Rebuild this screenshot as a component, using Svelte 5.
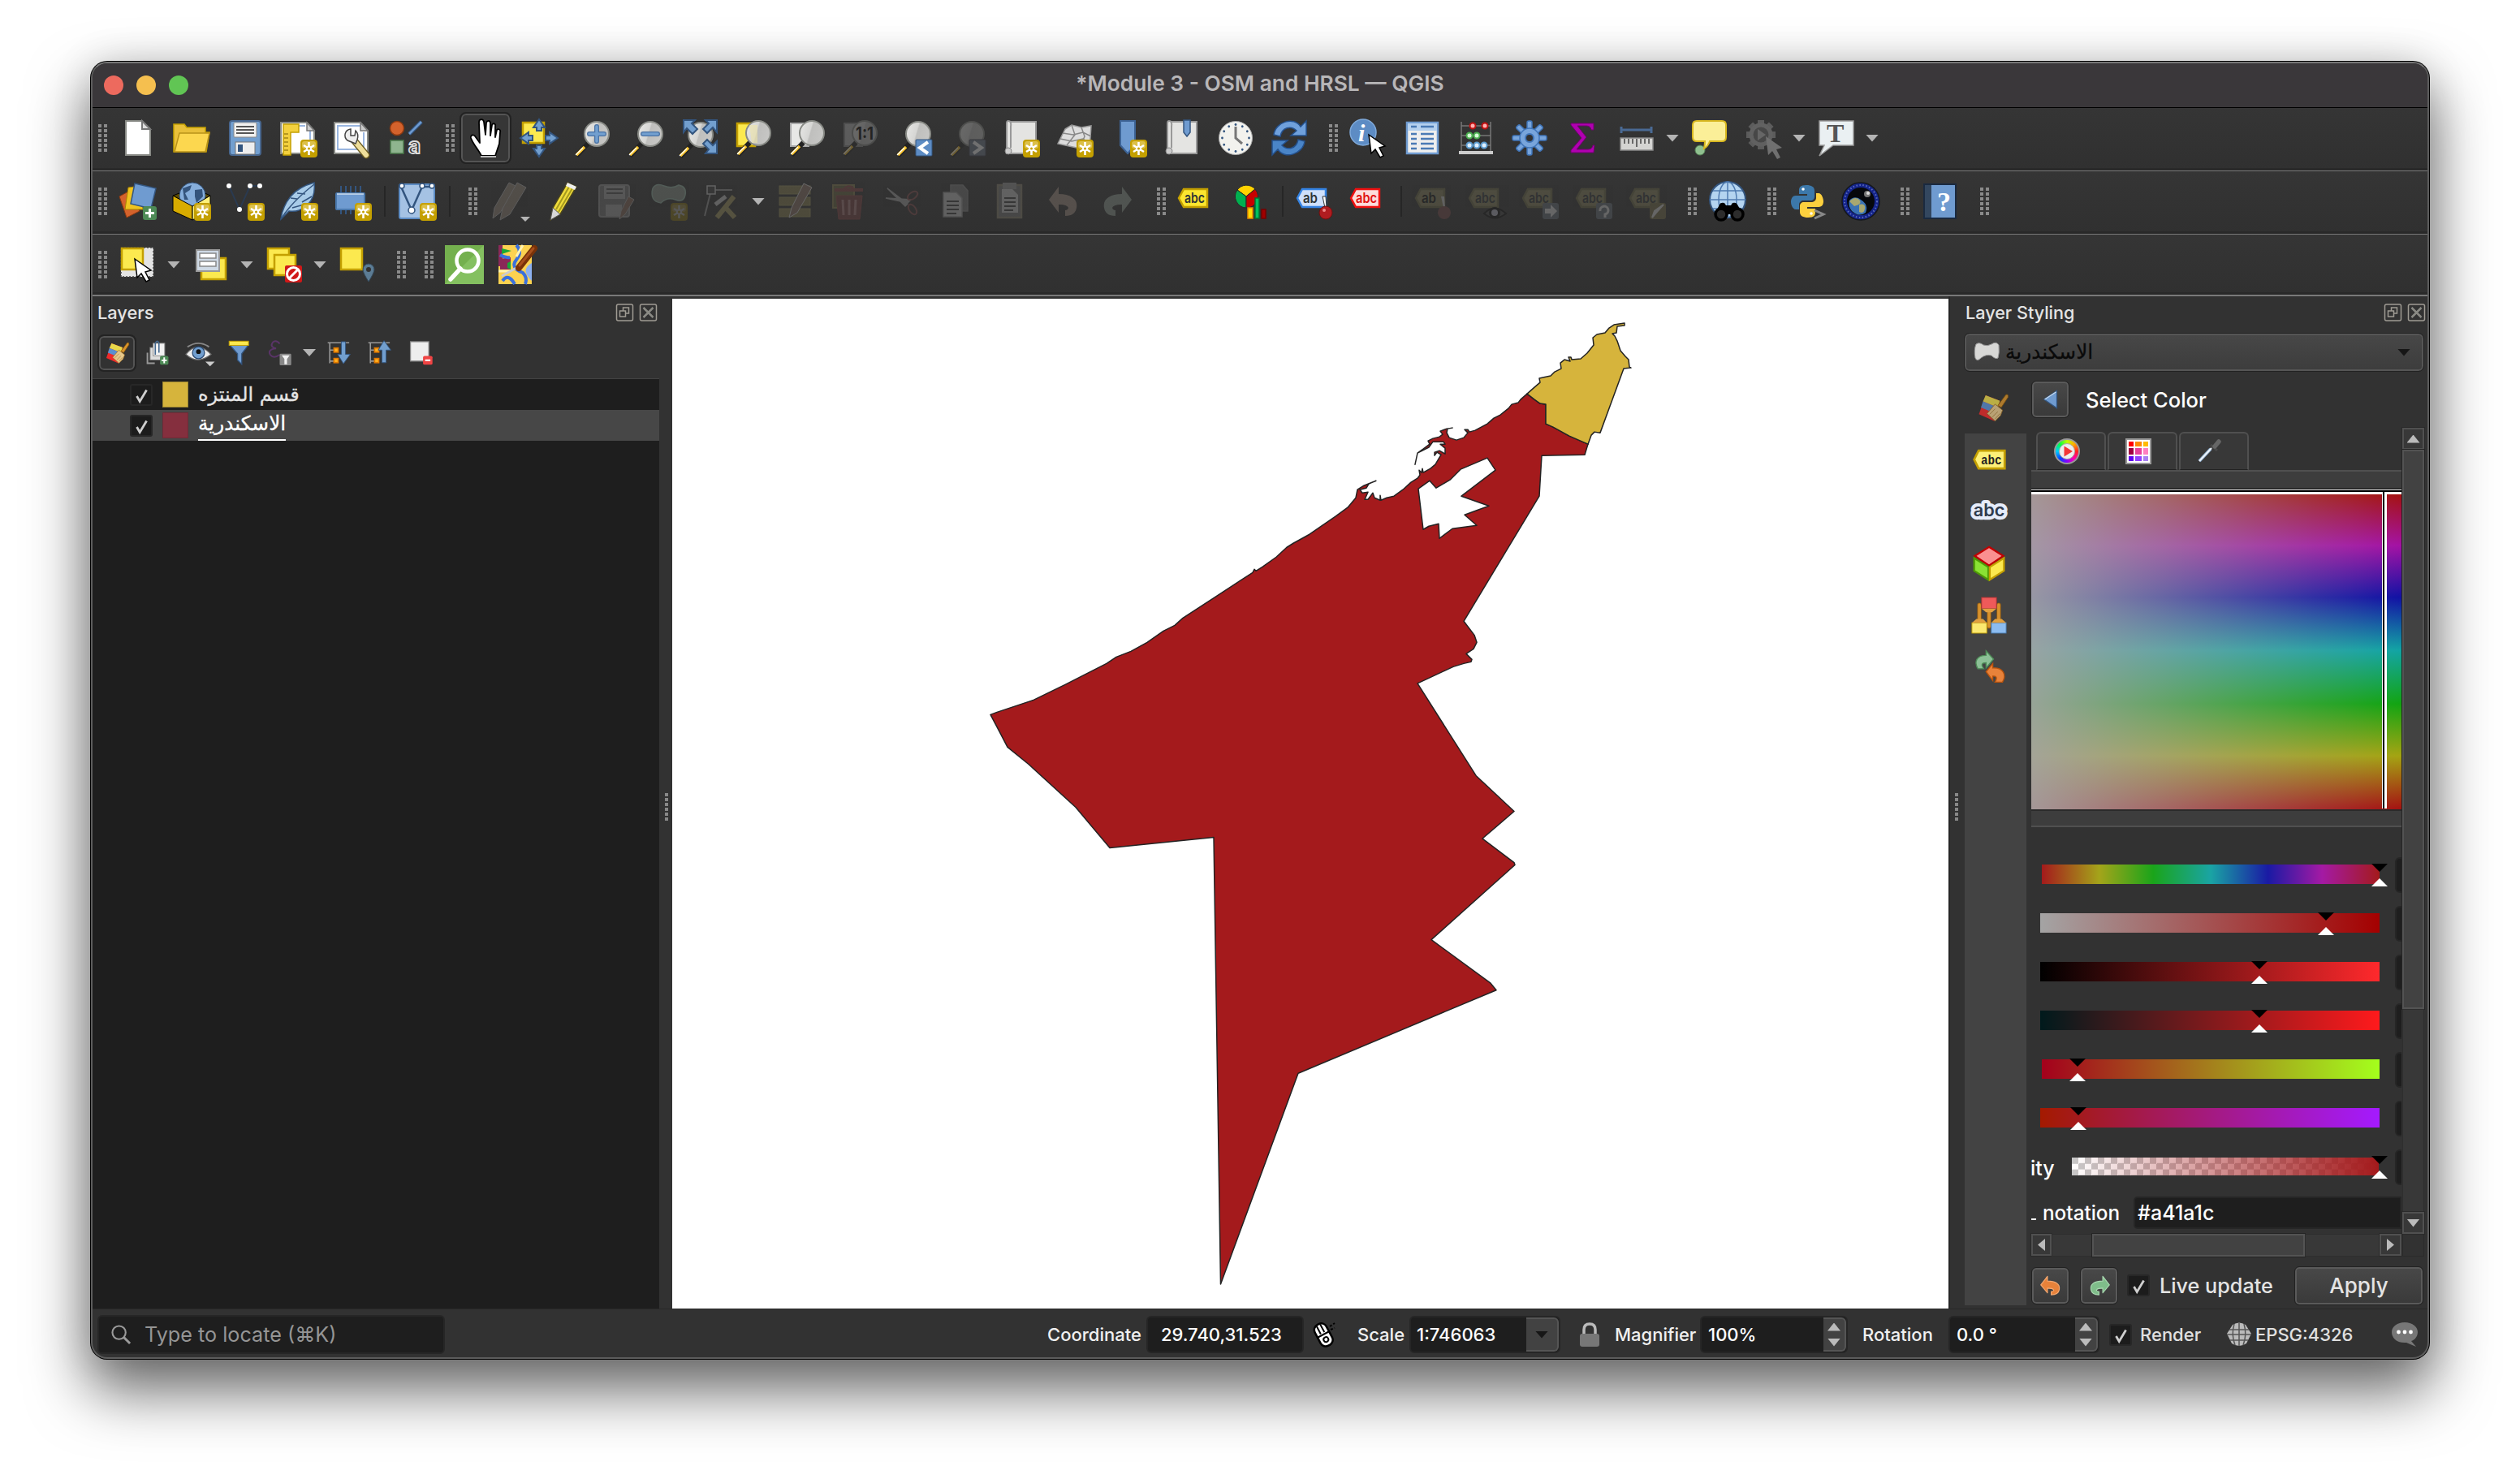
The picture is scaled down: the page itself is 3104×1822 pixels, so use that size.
<script>
  // Toolbar contents; "|" is a separator, "h" a drag handle, "hw" the wide variant.
  // A trailing "+" marks a drop-down arrow, a leading "~" a disabled action.
  const rows = [
    'h0 new open save layoutnew layoutmgr style h hand! pan zoomin zoomout zoomfull zoomsel zoomlayer ~zoomnative zoomlast ~zoomnext mapnew map3d bookmarknew bookmarks clock refresh h identify table abacus gear sigma measure+ tip ~action+ text+'.split(' '),
    'h0 source geopackage vnew spatialite chip | virtual | h ~pencils pencil ~saveedit ~addpoly ~nodes+ ~multiedit ~trash ~cut ~copy ~paste ~undo ~redo h label diagram | labpin labred | ~labpin2 ~labeye ~labmove ~labrot ~labedit h globe h python nga h help h'.split(' '),
    'h0 select+ form+ deselect+ selloc h hw osmsearch osmedit'.split(' ')
  ].map((r) =>
    r.map((t) => ({
      off: t.startsWith('~'),
      drop: t.endsWith('+'),
      on: t.endsWith('!'),
      name: t.replace(/[~+!]/g, '')
    }))
  );

  const sliders = [
    { cls: 'hue', at: 429 },
    { cls: 'sat', at: 363 },
    { cls: 'val', at: 281 },
    { cls: 'red', at: 281 },
    { cls: 'green', at: 57 },
    { cls: 'blue', at: 58 }
  ];

  const beard = [0, 1, 2, 3, 4, 5];
  const ticks = [0, 1, 2, 3, 4, 5, 6, 7, 8, 9, 10, 11];
</script>

{#snippet star(x, y)}
  <g transform="translate({x} {y})">
    <rect width="21" height="22" rx="4" fill="#c4a000" />
    <rect x="2" y="2" width="17" height="9" rx="3" fill="#dcc04a" />
    <path d="M10.500 3v16M4 7l13 8M17 7l-13 8" stroke="#fff" stroke-width="2.600" />
    <circle cx="10.500" cy="11" r="3.500" fill="#fff" />
    <circle cx="10.500" cy="11" r="1.500" fill="#c4a000" />
  </g>
{/snippet}

{#snippet lens(cx, cy)}
  <path d="M{cx - 10} {cy + 11}L{cx - 25} {cy + 27}" stroke="#222" stroke-width="6" />
  <path d="M{cx - 15} {cy + 16}L{cx - 25} {cy + 26}" stroke="#fcc62e" stroke-width="3.500" />
  <path d="M{cx - 17} {cy + 17}L{cx - 26} {cy + 26}" stroke="#fff" stroke-width="1.200" />
  <circle {cx} {cy} r="15" fill="url(#lensg)" stroke="#888a85" stroke-width="2" />
{/snippet}

{#snippet cursor(x, y)}
  <path transform="translate({x} {y})" d="M0 0L3 23L8 18L14 28L18 26L13 16L20 14Z" fill="#fff" stroke="#000" stroke-width="1.500" />
{/snippet}

{#snippet tag(fill, stroke, s)}
  <path d="M2 20L8 9H37V31H8Z" {fill} {stroke} stroke-width="2.500" />
  <text x="9" y="26" font-size="17" font-weight="600" textLength="25" lengthAdjust="spacingAndGlyphs" fill="#2e3436">{s}</text>
{/snippet}

{#snippet pencilShape()}
  <path d="M31 1L42 6L22 40L10 47L13 32Z" fill="#f0dc3a" stroke="#4a4420" stroke-width="1.500" />
  <path d="M33 6L17 34M37 8L20 37" stroke="#a59a20" stroke-width="2" />
  <path d="M31 1L42 6L40 10L29 5Z" fill="#eee" />
  <path d="M13 32L22 40L10 47Z" fill="#d8d8d8" stroke="#555" />
{/snippet}

{#snippet paint()}
  <path d="M13 6L34 14L26 44L3 34Z" fill="#ef2929" />
  <path d="M13 6L34 14L31 24L9 15Z" fill="#e8d84a" />
  <path d="M9 15L31 24L28 33L6 24Z" fill="#5b8fd0" />
  <path d="M31 21L43 5Q47 4 46 9L36 24Z" fill="#d8932c" stroke="#8f5902" />
  <path d="M27 19L38 28L35 36L27 44L15 33Z" fill="#e6c78a" stroke="#9a6a20" />
  <path d="M19 34L27 26M23 38L31 30M27 41L34 33" stroke="#a87c3a" />
{/snippet}

{#snippet undoShape(color, edge)}
  <path d="M3 22L17 4V14C34 14 44 20 42 32C41 38 36 43 25 43V36C33 36 33 29 17 29V39Z" fill={color} stroke={edge} stroke-width="2" stroke-linejoin="round" />
{/snippet}

{#snippet icon(n)}
  <svg class="ic" viewBox="0 0 48 48">
    {#if n === 'new'}
      <path d="M9 3H29L39 13V45H9Z" fill="#fff" stroke="#888a85" stroke-width="2" /><path d="M29 3V13H39Z" fill="#ddd" stroke="#777" stroke-width="2" />
    {:else if n === 'open'}
      <path d="M2 7H15L18 11H41V17H46L42 41H2Z" fill="#e9c03a" stroke="#c4a000" stroke-width="1.500" /><path d="M9 18H46L41 41H3Z" fill="#fcd74f" stroke="#b8921a" stroke-width="1.500" />
    {:else if n === 'save'}
      <rect x="5" y="3" width="38" height="42" rx="3" fill="#729fcf" stroke="#48678f" stroke-width="2" /><rect x="10" y="5" width="28" height="18" rx="1" fill="#f2f2f0" stroke="#888" /><path d="M13 10H35M13 14H35M13 18H35" stroke="#555" stroke-width="2" /><rect x="12" y="29" width="24" height="15" fill="#eee" stroke="#777" /><rect x="15" y="32" width="6" height="9" fill="#33557f" />
    {:else if n === 'layoutnew'}
      <path d="M2 5H34L43 15V43H2Z" fill="#fff" stroke="#888a85" stroke-width="2" /><path d="M7 9H32M38 15V38" stroke="#9ab6e0" stroke-width="2" /><path d="M34 5V15H43Z" fill="#ccc" stroke="#777" stroke-width="1.500" /><path d="M5 7H24V17H14V45H5Z" fill="#f3d03e" stroke="#c4a000" stroke-width="1.500" /><path d="M6 19H11M6 24H11M6 29H11M6 34H11M6 39H11" stroke="#7a6100" />{@render star(26, 26)}
    {:else if n === 'layoutmgr'}
      <path d="M2 5H34L43 15V43H2Z" fill="#fff" stroke="#888a85" stroke-width="2" /><path d="M34 9H6V38H38V17" fill="none" stroke="#9ab6e0" stroke-width="2" /><path d="M34 5V15H43Z" fill="#ccc" stroke="#777" stroke-width="1.500" /><path d="M27 28L41 45" stroke="#6b5c22" stroke-width="9" stroke-linecap="round" /><path d="M27 28L41 45" stroke="#efdf9a" stroke-width="6" stroke-linecap="round" /><path d="M22 13C14 14 13 23 18 27L28 31L30 26C32 20 30 17 28 15L27 21L22 21Z" fill="#eee" stroke="#444" stroke-width="1.500" />
    {:else if n === 'style'}
      <circle cx="13" cy="12" r="8.500" fill="#d4622c" stroke="#8f3a10" stroke-width="1.500" /><path d="M28 19L43 4" stroke="#33557f" stroke-width="5" /><path d="M28 19L43 4" stroke="#6f9bd0" stroke-width="2.500" /><rect x="5" y="27" width="16" height="16" fill="#8fb58f" stroke="#4a7a4a" stroke-width="1.500" /><text x="27" y="43" font-size="26" font-weight="700" fill="#333" stroke="#ddd" stroke-width="1.800">a</text>
    {:else if n === 'hand'}
      <path d="M6 24C5 20 10 19 12 23L17 30L16 5C16 0 21 0 22 4L24 20L25 5C26 2 30 2 30 6L30 21L32 8C33 5 37 6 36 10L36 23L38 14C40 12 43 14 42 17L41 31L36 46H19C15 38 9 32 6 24Z" fill="#fff" stroke="#000" stroke-width="1.800" stroke-linejoin="round" /><path d="M18 47H37" stroke="#bbb" stroke-width="2" />
    {:else if n === 'pan'}
      <rect x="4" y="5" width="26" height="25" fill="#fce94f" stroke="#c4a000" stroke-width="2.500" /><path d="M24 1L31 11H27V15H21V11H17ZM24 47L31 37H27V33H21V37H17ZM1 24L11 17V21H16V27H11V31ZM47 24L37 17V21H32V27H37V31Z" fill="#729fcf" stroke="#33557f" stroke-width="2" />
    {:else if n === 'zoomin'}
      {@render lens(29, 19)}<path d="M29 10V28M20 19H38" stroke="#4a72a4" stroke-width="6" stroke-linecap="round" /><path d="M29 10V28M20 19H38" stroke="#729fcf" stroke-width="3.500" stroke-linecap="round" />
    {:else if n === 'zoomout'}
      {@render lens(29, 19)}<path d="M20 19H38" stroke="#4a72a4" stroke-width="6" stroke-linecap="round" /><path d="M20 19H38" stroke="#729fcf" stroke-width="3.500" stroke-linecap="round" />
    {:else if n === 'zoomfull'}
      {@render lens(25, 20)}<path d="M4 2H18L14 6L21 13L15 19L8 12L4 17ZM45 2H31L35 6L28 13L33 18L40 11L45 17ZM45 43H31L35 38L28 31L33 26L40 33L45 28Z" fill="#729fcf" stroke="#33557f" stroke-width="2" />
    {:else if n === 'zoomsel'}
      <rect x="4" y="6" width="22" height="28" fill="#fce94f" stroke="#c4a000" stroke-width="2.500" />{@render lens(30, 18)}<path d="M19 8H29V30H22Z" fill="#efe4a8" opacity=".6" />
    {:else if n === 'zoomlayer'}
      <rect x="4" y="6" width="22" height="28" fill="#e8e8e6" stroke="#aaa" stroke-width="2" />{@render lens(30, 18)}
    {:else if n === 'zoomnative'}
      <rect x="4" y="6" width="22" height="28" fill="#bbb" stroke="#888" stroke-width="2" />{@render lens(29, 18)}<text x="18" y="26" font-size="21" font-weight="700" textLength="22" lengthAdjust="spacingAndGlyphs" fill="#000">1:1</text>
    {:else if n === 'zoomlast'}
      {@render lens(29, 19)}<rect x="26" y="26" width="20" height="20" rx="1" fill="#5d8cc4" stroke="#33557f" /><path d="M41 29L31 36L41 43" stroke="#fff" stroke-width="4" fill="none" />
    {:else if n === 'zoomnext'}
      {@render lens(29, 19)}<rect x="26" y="26" width="20" height="20" rx="1" fill="#707c8c" stroke="#445" /><path d="M31 29L41 36L31 43" stroke="#fff" stroke-width="4" fill="none" />
    {:else if n === 'mapnew'}
      <path d="M10 4H42V43H6V6Q6 3 8 3Q12 3 11 10V36" fill="#e4e4e2" stroke="#999" stroke-width="2" /><circle cx="8" cy="40" r="4" fill="#ccc" stroke="#888" />{@render star(26, 26)}
    {:else if n === 'map3d'}
      <path d="M12 13L20 8L32 11L44 9L42 38L26 36L3 31Z" fill="#ddd" stroke="#999" stroke-width="1.500" /><path d="M9 18L22 20L34 17L44 22M6 25L20 28L34 25L43 31M20 8L24 20L14 33M32 11L36 22L30 36" fill="none" stroke="#888" stroke-width="1.500" />{@render star(26, 26)}
    {:else if n === 'bookmarknew'}
      <path d="M14 3H32V33L23 43L14 33Z" fill="#6f9bd0" stroke="#3d6496" stroke-width="2" />{@render star(26, 26)}
    {:else if n === 'bookmarks'}
      <path d="M10 4H42V43H6V6Q6 3 8 3Q12 3 11 10V36" fill="#e4e4e2" stroke="#999" stroke-width="2" /><circle cx="8" cy="40" r="4" fill="#ccc" stroke="#888" /><path d="M26 2H34V17L30 22L26 17Z" fill="#6f9bd0" stroke="#33557f" stroke-width="1.500" />
    {:else if n === 'clock'}
      <circle cx="24" cy="24" r="20.500" fill="#f2f2ee" stroke="#aaa" />
      {#each ticks as t}<circle cx="24" cy="7.500" r="1.400" fill="#33557f" transform="rotate({t * 30} 24 24)" />{/each}
      <path d="M24 10V24L32 31" fill="none" stroke="#777" stroke-width="3" />
    {:else if n === 'refresh'}
      <path d="M5 20C7 4 30 -3 38 10L45 3V21H26L33 15C26 8 15 11 13 22Z" fill="#6fa0dc" stroke="#24508c" stroke-width="1.500" /><path d="M43 28C41 44 18 51 10 38L3 45V27H22L15 33C22 40 33 37 35 26Z" fill="#4a85c8" stroke="#24508c" stroke-width="1.500" />
    {:else if n === 'identify'}
      <circle cx="17" cy="17" r="16" fill="#5d8cc4" stroke="#7faadb" stroke-width="1.500" /><text x="11" y="28" font-size="30" font-weight="700" font-style="italic" font-family="Liberation Serif, serif" fill="#fff">i</text>{@render cursor(24, 20)}
    {:else if n === 'table'}
      <rect x="5" y="5" width="38" height="38" fill="#eee" stroke="#6f9bd0" stroke-width="2.500" /><rect x="6" y="6" width="36" height="9" fill="#b4d0ee" /><path d="M10 10H17M22 10H38M10 19H17M22 19H38M10 25H17M22 25H38M10 31H17M22 31H38M10 37H17M22 37H38" stroke="#4a7ab5" stroke-width="2.500" />
    {:else if n === 'abacus'}
      <path d="M6 4V42M42 4V42M6 9H42M6 21H42M6 33H42" stroke="#777" stroke-width="1.500" /><path d="M3 42H45" stroke="#ccc" stroke-width="4" />
      <g stroke-width="2"><g fill="#ffb0b0" stroke="#c01010"><circle cx="20" cy="9" r="3.500" /><circle cx="35" cy="9" r="3.500" /></g><g fill="#d8ffd8" stroke="#4caf50"><circle cx="16" cy="21" r="3.500" /><circle cx="25" cy="21" r="3.500" /></g><g fill="#e0f0ff" stroke="#5d9cd0"><circle cx="16" cy="33" r="3.500" /><circle cx="25" cy="33" r="3.500" /><circle cx="34" cy="33" r="3.500" /></g></g>
    {:else if n === 'gear'}
      {#each [0, 45, 90, 135, 180, 225, 270, 315] as a}<rect x="21" y="3" width="6" height="12" rx="2" fill="#78a5dc" stroke="#3f74b8" stroke-width="1.500" transform="rotate({a} 24 24)" />{/each}<circle cx="24" cy="24" r="12" fill="#78a5dc" stroke="#3f74b8" stroke-width="1.500" /><circle cx="24" cy="24" r="5" fill="#323232" stroke="#3f74b8" stroke-width="2" />
    {:else if n === 'sigma'}
      <path d="M9 6H37V14H34Q33 9 28 9H17L28 23L16 38H30Q35 38 36 33H38L37 42H9V39L22 24L9 8Z" fill="#b000b0" stroke="#700070" />
    {:else if n === 'measure'}
      <path d="M5 14H42M5 10V18M42 10V18" stroke="#4a6a94" stroke-width="3" /><rect x="4" y="24" width="40" height="15" fill="#d4d4d2" stroke="#888" stroke-width="1.500" /><path d="M9 25V31M14 25V31M19 25V31M24 25V35M29 25V31M34 25V31M39 25V31" stroke="#444" stroke-width="1.500" />
    {:else if n === 'tip'}
      <circle cx="12" cy="39" r="6" fill="#8fc08f" stroke="#5a8a5a" /><path d="M8 3H39Q44 3 44 8V23Q44 28 39 28H24Q22 34 17 37Q18 32 18 28H8Q3 28 3 23V8Q3 3 8 3Z" fill="#fbef98" stroke="#d8b820" stroke-width="2" />
    {:else if n === 'action'}
      {#each [0, 45, 90, 135, 180, 225, 270, 315] as a}<rect x="17" y="2" width="8" height="8" fill="#bbb" transform="rotate({a} 21 20)" />{/each}<circle cx="21" cy="20" r="12" fill="#777" stroke="#ccc" stroke-width="5" /><path d="M17 13L27 20L17 27Z" fill="#ddd" /><path transform="translate(27 22)" d="M0 0L3 23L8 18L14 28L18 26L13 16L20 14Z" fill="#fff" />
    {:else if n === 'text'}
      <path d="M3 3H45V33H20L3 46L9 33H3Z" fill="#eaf0f2" stroke="#999" stroke-width="1.500" /><text x="12" y="29" font-size="32" font-family="Liberation Serif, serif" font-weight="700" fill="#555">T</text>
    {:else if n === 'source'}
      <path d="M1 18L12 12L26 36L10 44Z" fill="#d4622c" stroke="#8f3a10" /><path d="M12 7L28 5L30 34L8 34Z" fill="#f0c420" stroke="#a88400" /><path d="M20 2L46 8L40 33L15 27Z" fill="#6f9bd0" stroke="#33557f" stroke-width="1.500" /><rect x="30" y="30" width="17" height="17" rx="3" fill="#4d8a56" /><path d="M38.500 33V44M33 38.500H44" stroke="#fff" stroke-width="3" />
    {:else if n === 'geopackage'}
      <path d="M1 17L14 12L36 12L47 17L25 30Z" fill="#5c4a00" stroke="#000" /><circle cx="25" cy="17" r="16" fill="#86aedb" stroke="#33557f" /><path d="M13 8L24 4L22 10L16 14L20 22L15 22ZM28 10L37 9L38 18L30 26L28 18Z" fill="#34547c" /><path d="M1 17L25 30V47L1 36Z" fill="#d8ac00" stroke="#000" /><path d="M25 30L47 17V35L25 47Z" fill="#fdf07a" stroke="#000" />{@render star(27, 26)}
    {:else if n === 'vnew'}
      <path d="M4 5L17 34L30 5H42" stroke="#2a3a50" stroke-width="2" fill="none" /><g fill="#fff"><circle cx="4" cy="5" r="3" /><circle cx="17" cy="34" r="3" /><circle cx="30" cy="5" r="3" /><circle cx="42" cy="5" r="3" /></g>{@render star(27, 26)}
    {:else if n === 'spatialite'}
      <path d="M2 46Q4 30 14 18T43 1Q45 18 35 28T12 36Z" fill="#a8cbe8" stroke="#33557f" stroke-width="1.500" /><path d="M2 46Q14 26 43 3M14 20L22 21M22 14L32 15M16 32L34 27M28 25L40 18" stroke="#33557f" fill="none" stroke-width="1.500" />{@render star(27, 26)}
    {:else if n === 'chip'}
      <path d="M10 5V40M16 5V40M22 5V40M28 5V40M34 5V40" stroke="#33557f" stroke-width="2" /><rect x="4" y="14" width="35" height="20" rx="1" fill="#6f9bd0" stroke="#4a78ac" stroke-width="2" /><path d="M5 15H38" stroke="#cde" stroke-width="1.500" />{@render star(27, 26)}
    {:else if n === 'virtual'}
      <rect x="2" y="3" width="43" height="42" rx="2" fill="#a5c2e4" stroke="#5d8cc4" stroke-width="2" /><path d="M4 6L17 35L30 6H42" stroke="#33557f" stroke-width="2.500" fill="none" /><g fill="#fff" stroke="#33557f" stroke-width="1.500"><circle cx="5" cy="5" r="3" /><circle cx="17" cy="35" r="4" /><circle cx="30" cy="5" r="3" /><circle cx="42" cy="5" r="3" /></g>{@render star(27, 26)}
    {:else if n === 'pencils'}
      <g fill="#9a8a7c" stroke="#bbb"><path d="M25 1L35 6L14 38L5 45L7 32Z" /><path d="M35 1L46 7L26 40L14 47L17 33Z" /></g>
    {:else if n === 'pencil'}
      {@render pencilShape()}
    {:else if n === 'saveedit'}
      <rect x="4" y="4" width="37" height="39" rx="3" fill="#777" stroke="#999" stroke-width="2" /><rect x="10" y="5" width="26" height="16" fill="#aaa" /><path d="M13 9H33M13 14H33" stroke="#555" stroke-width="2" /><rect x="12" y="28" width="20" height="14" fill="#aaa" /><path d="M40 18L47 22L36 40L29 46L31 36Z" fill="#8a6a5a" stroke="#aaa" />
    {:else if n === 'addpoly'}
      <path d="M4 8Q8 1 18 5T36 4Q46 6 44 16T32 22T14 26Q0 24 4 8Z" fill="#8a958c" stroke="#9ba" stroke-width="1.500" /><g opacity=".6">{@render star(26, 26)}</g>
    {:else if n === 'nodes'}
      <path d="M2 42L10 10H36" stroke="#999" fill="none" stroke-width="2" /><rect x="5" y="5" width="10" height="10" fill="#444" stroke="#ccc" stroke-width="1.500" /><path d="M17 44L38 18" stroke="#a89c60" stroke-width="6" /><path d="M27 31L39 44" stroke="#a89c60" stroke-width="6" /><path d="M15 28L28 18" stroke="#ccc" stroke-width="5" />
    {:else if n === 'multiedit'}
      <g fill="#8b8350" stroke="#a09860"><rect x="4" y="5" width="38" height="10" /><rect x="4" y="19" width="38" height="10" /><rect x="4" y="33" width="38" height="10" /></g><path d="M34 2L44 7L26 38L16 44L19 32Z" fill="#8f7468" stroke="#ddd" />
    {:else if n === 'trash'}
      <rect x="4" y="4" width="26" height="28" fill="#6b6840" stroke="#8b8350" stroke-width="2" /><path d="M8 17H40L37 46H11Z" fill="#7a4444" stroke="#904848" /><path d="M6 10H41" stroke="#8a4848" stroke-width="4" /><path d="M16 22L17 41M24 22V41M32 22L31 41" stroke="#b08080" stroke-width="3" /><path d="M17 9Q24 2 30 9" stroke="#904848" stroke-width="2.500" fill="none" />
    {:else if n === 'cut'}
      <path d="M5 8L30 27L27 30ZM3 20L34 22L30 26Z" fill="#aaa" stroke="#aaa" stroke-width="1.500" /><g fill="none" stroke="#8a5050" stroke-width="2"><ellipse cx="36" cy="17" rx="7" ry="4" transform="rotate(-35 36 17)" /><ellipse cx="36" cy="34" rx="7" ry="4" transform="rotate(55 36 34)" /></g>
    {:else if n === 'copy'}
      <path d="M17 4H32L38 11V36H17Z" fill="#777" stroke="#888" stroke-width="1.500" /><path d="M8 13H24L31 20V43H8Z" fill="#ccc" stroke="#999" stroke-width="1.500" /><path d="M12 24H27M12 29H27M12 34H27M12 39H24" stroke="#444" stroke-width="2" />
    {:else if n === 'paste'}
      <rect x="9" y="4" width="29" height="40" fill="#777" stroke="#8b8570" stroke-width="2.500" /><path d="M14 9H27L34 16V38H14Z" fill="#ccc" /><rect x="15" y="1" width="17" height="8" fill="#999" /><path d="M17 20H31M17 25H31M17 30H31M17 35H28" stroke="#444" stroke-width="2" />
    {:else if n === 'undo'}
      <path d="M6 22L18 6V15C34 15 42 22 40 32C39 38 35 42 26 42V35C32 34 32 28 18 28V38Z" fill="#a89488" />
    {:else if n === 'redo'}
      <path d="M42 22L30 6V15C14 15 6 22 8 32C9 38 13 42 22 42V35C16 34 16 28 30 28V38Z" fill="#96a298" />
    {:else if n === 'label'}
      {@render tag('#fce62f', '#c4a000', 'abc')}
    {:else if n === 'diagram'}
      <g stroke="#2a2a2a"><path d="M19 18L8 10A14 14 0 0 1 30 9Z" fill="#ffd200" /><path d="M19 18L8 10A14 14 0 0 0 19 32Z" fill="#00b050" /><path d="M19 18L30 9A14 14 0 0 1 19 32Z" fill="#c80000" /></g><rect x="21" y="32" width="6" height="13" fill="#fd0" stroke="#e88a00" stroke-width="1.500" /><rect x="30" y="20" width="5" height="25" fill="#00c060" stroke="#007030" stroke-width="1.500" /><rect x="38" y="34" width="5" height="11" fill="#a00000" stroke="#700" stroke-width="1.500" />
    {:else if n === 'labpin'}
      {@render tag('#cfe0fa', '#3584e4', '')}<text x="9" y="26" font-size="17" font-weight="600" textLength="18" lengthAdjust="spacingAndGlyphs" fill="#2e3436">ab</text><path d="M33 18L37 18L38 32H36Z" fill="#fff" stroke="#333" /><circle cx="37" cy="38" r="8" fill="#b01c20" stroke="#701010" /><circle cx="35" cy="35" r="2" fill="#e88" />
    {:else if n === 'labred'}
      {@render tag('#fddcdc', '#f01010', '')}<text x="8" y="26" font-size="17" font-weight="600" textLength="26" lengthAdjust="spacingAndGlyphs" fill="#e01010">abc</text>
    {:else if n === 'labpin2'}
      {@render tag('#8a865e', '#6f6b45', '')}<text x="9" y="26" font-size="17" font-weight="600" textLength="18" lengthAdjust="spacingAndGlyphs" fill="#111">ab</text><path d="M33 18L37 18L38 32H36Z" fill="#ccc" /><circle cx="37" cy="38" r="8" fill="#7a4c4c" />
    {:else if n === 'labeye'}
      {@render tag('#8a865e', '#6f6b45', 'abc')}<path d="M20 39Q33 26 47 39Q33 50 20 39Z" fill="#444" stroke="#111" stroke-width="2" /><circle cx="33" cy="38" r="7" fill="#111" /><circle cx="33" cy="38" r="4" fill="#bbc" />
    {:else if n === 'labmove'}
      {@render tag('#8a865e', '#6f6b45', 'abc')}<rect x="26" y="26" width="20" height="20" rx="3" fill="#66707a" /><path d="M29 33H36V28L44 36L36 44V39H29Z" fill="#ddd" />
    {:else if n === 'labrot'}
      {@render tag('#8a865e', '#6f6b45', 'abc')}<rect x="26" y="26" width="20" height="20" rx="3" fill="#66707a" /><path d="M31 36A5 5 0 1 1 37 40V44" fill="none" stroke="#ddd" stroke-width="3" />
    {:else if n === 'labedit'}
      {@render tag('#8a865e', '#6f6b45', 'abc')}<rect x="26" y="26" width="20" height="20" rx="3" fill="#77704a" /><path d="M43 28L34 38L29 44L32 36Z" fill="#ddd" stroke="#ddd" stroke-width="2" />
    {:else if n === 'globe'}
      <circle cx="24" cy="22" r="22" fill="#b4d4f0" stroke="#33557f" stroke-width="2" /><path d="M24 0V44M2 22H46M6 11H42M6 33H42" stroke="#4f7bb0" stroke-width="1.500" /><ellipse cx="24" cy="22" rx="11" ry="22" fill="none" stroke="#4f7bb0" stroke-width="1.500" /><path d="M8 40L14 28Q15 25 20 26L22 29H28L30 26Q35 25 36 28L43 40Z" fill="#000" /><g fill="#2c2c2c" stroke="#000" stroke-width="3.500"><circle cx="16" cy="40" r="7" /><circle cx="36" cy="40" r="7" /></g>
    {:else if n === 'python'}
      <path d="M23 4C15 4 14 7 14 11V15H24V17H10C5 17 4 22 4 25S6 34 10 34H14V28C14 25 17 23 19 23H28C31 23 33 21 33 18V11C33 6 29 4 23 4Z" fill="#3c78aa" /><path d="M25 44C33 44 34 41 34 37V33H24V31H38C43 31 44 27 44 24S42 14 38 14H35V20C35 23 32 25 29 25H20C17 25 15 27 15 30V37C15 42 19 44 25 44Z" fill="#fcd03e" /><circle cx="19" cy="9" r="1.800" fill="#fff" /><circle cx="29" cy="39" r="1.800" fill="#fff" /><path d="M33 35L44 40L33 45" fill="none" stroke="#888" stroke-width="3" />
    {:else if n === 'nga'}
      <circle cx="24" cy="24" r="23" fill="#14248a" stroke="#15181c" stroke-width="1.500" /><circle cx="24" cy="24" r="20" fill="none" stroke="#5c6cb8" stroke-width="2" stroke-dasharray="1.500 2.500" /><circle cx="24" cy="24" r="17" fill="#06080c" /><path d="M10 23Q16 16 24 22Q34 28 30 38Q22 44 13 36Q8 30 10 23Z" fill="#3a72b4" /><path d="M10 24Q17 17 22 22T16 30ZM22 28Q30 26 29 33T22 37Z" fill="#a8a870" /><circle cx="32" cy="15" r="4" fill="#777" /><circle cx="33" cy="14" r="2" fill="#ddd" />
    {:else if n === 'help'}
      <rect x="4" y="3" width="39" height="42" fill="#6f9bd0" stroke="#1a2a40" stroke-width="2" /><rect x="5" y="4" width="8" height="40" fill="#33475f" /><text x="20" y="36" font-size="34" font-family="Liberation Serif, serif" font-weight="700" fill="#fff">?</text>
    {:else if n === 'select'}
      <rect x="3" y="3" width="40" height="36" fill="#e4e4e4" stroke="#444" stroke-width="1.500" stroke-dasharray="2 2" /><rect x="4" y="4" width="26" height="26" fill="#fce94f" stroke="#c4a000" stroke-width="2.500" />{@render cursor(20, 17)}
    {:else if n === 'form'}
      <rect x="12" y="16" width="30" height="26" fill="#fce94f" stroke="#c4a000" stroke-width="2.500" /><rect x="6" y="6" width="28" height="26" fill="#cfdae6" stroke="#999" stroke-width="2" /><rect x="10" y="10" width="20" height="6" fill="#fff" stroke="#888" stroke-width="1.500" /><rect x="10" y="20" width="20" height="6" fill="#fff" stroke="#888" stroke-width="1.500" />
    {:else if n === 'deselect'}
      <rect x="4" y="4" width="26" height="25" fill="#fce94f" stroke="#c4a000" stroke-width="2.500" /><rect x="12" y="12" width="26" height="25" fill="#fce94f" stroke="#c4a000" stroke-width="2.500" /><rect x="25" y="25" width="21" height="21" rx="2" fill="#d01818" /><circle cx="35.500" cy="35.500" r="8" fill="none" stroke="#fff" stroke-width="3" /><path d="M30 41L41 30" stroke="#fff" stroke-width="3" />
    {:else if n === 'selloc'}
      <rect x="4" y="4" width="26" height="26" fill="#fce94f" stroke="#c4a000" stroke-width="2.500" /><path d="M38 45Q31 34 31 30A7 7 0 0 1 45 30Q45 34 38 45Z" fill="#5c7c94" stroke="#33485a" /><circle cx="38" cy="30" r="3" fill="#323232" />
    {:else if n === 'osmsearch'}
      <rect width="48" height="48" fill="#74b04e" /><path d="M0 48L48 0V48Z" fill="#8cc868" opacity=".7" /><circle cx="28" cy="19" r="13.500" fill="none" stroke="#fff" stroke-width="4.500" /><path d="M19 29L7 42" stroke="#fff" stroke-width="5.500" stroke-linecap="round" />
    {:else if n === 'osmedit'}
      <rect width="41" height="48" fill="#fcd250" /><path d="M0 0H5V26H0ZM2 17L15 15V30H2Z" fill="#8a2858" /><path d="M4 4L16 7L4 11ZM11 22L15 20V30L11 28Z" fill="#18a838" /><path d="M22 0Q30 8 22 18T30 34Q36 40 33 48M5 44Q12 34 20 48M2 12Q8 16 14 15" stroke="#3a70dc" stroke-width="4" fill="none" /><path d="M41 22Q26 30 41 44Z" fill="#8cb0f0" /><path d="M30 0L22 14M0 32L14 32" stroke="#fff3b0" stroke-width="3" /><path d="M4 38L22 28" stroke="#ccc" stroke-width="3" /><path d="M25 28L44 4" stroke="#7a3208" stroke-width="8" stroke-linecap="round" /><path d="M26 25L43 4" stroke="#a8501c" stroke-width="3" stroke-linecap="round" />
    {:else if n === 'paint'}
      {@render paint()}
    {:else if n === 'group'}
      <path d="M4 24V44H18" fill="none" stroke="#999" stroke-width="3" /><rect x="9" y="14" width="22" height="24" fill="#ddd" stroke="#777" stroke-width="1.500" /><rect x="15" y="6" width="22" height="24" fill="#f2f2f2" stroke="#888" stroke-width="1.500" /><path d="M19 28V6Q23 -2 26 6V24" fill="none" stroke="#44688e" stroke-width="2.500" /><rect x="28" y="30" width="16" height="17" rx="3" fill="#4d8a56" /><path d="M36 33V44M31 38.500H41" stroke="#fff" stroke-width="3" />
    {:else if n === 'eye'}
      <path d="M3 13Q24 -1 44 13" fill="none" stroke="#888" stroke-width="3" /><path d="M0 27Q22 0 48 27Q22 48 0 27Z" fill="#eee" stroke="#666" stroke-width="2" /><circle cx="24" cy="24" r="11.500" fill="#729fcf" stroke="#2a4a74" stroke-width="2" /><circle cx="24" cy="22" r="4.500" fill="#111" /><path d="M37 41H55L46 50Z" fill="#ccc" />
    {:else if n === 'funnel'}
      <path d="M6 9H42L29 26V46L21 38V26Z" fill="#6f9bd0" stroke="#33557f" stroke-width="2" /><rect x="5" y="2" width="37" height="8" fill="#fce94f" stroke="#c4a000" stroke-width="1.500" />
    {:else if n === 'expr'}
      <path d="M24 7Q18 -1 11 4Q4 13 17 16Q0 18 6 28Q13 36 24 28" fill="none" stroke="#5a3468" stroke-width="3" /><rect x="24" y="26" width="22" height="22" rx="2" fill="#888" /><path d="M28 29H43L38 36V46H33V36Z" fill="#f2f2f2" />
    {:else if n === 'expand' || n === 'collapse'}
      <path d="M1 5H42M5 5V44M5 19H14M5 40H14" fill="none" stroke="#999" stroke-width="2.500" /><g fill="#ffb020" stroke="#e07800" stroke-width="2.500"><rect x="13" y="15" width="8" height="8" /><rect x="13" y="35" width="8" height="8" /></g>
      {#if n === 'expand'}<path d="M27 3H35V27H44L31 45L20 27H27Z" fill="#729fcf" stroke="#33557f" stroke-width="1.500" />{:else}<path d="M27 43H35V19H44L31 1L20 19H27Z" fill="#729fcf" stroke="#33557f" stroke-width="1.500" />{/if}
    {:else if n === 'remove'}
      <rect x="4" y="3" width="35" height="37" fill="#eee" stroke="#888" stroke-width="2" /><rect x="28" y="30" width="18" height="17" rx="3" fill="#ef4444" /><path d="M32 38.500H42" stroke="#fff" stroke-width="3.500" />
    {:else if n === 'slabel'}
      <path d="M4 24L10 12H45V36H10Z" fill="#fdf078" stroke="#c4a000" stroke-width="3" /><text x="13" y="31" font-size="18" font-family="Liberation Mono, monospace" textLength="28" lengthAdjust="spacingAndGlyphs" font-weight="700" fill="#222">abc</text>
    {:else if n === 'smask'}
      <text x="3" y="31" font-size="23" font-weight="600" textLength="42" lengthAdjust="spacingAndGlyphs" fill="#2e3a4c" stroke="#e6ecfa" stroke-width="9" stroke-linejoin="round" paint-order="stroke">abc</text>
    {:else if n === 'cube'}
      <path d="M24 2L43 14L24 27L5 14Z" fill="#fa9090" stroke="#c00000" stroke-width="2.500" /><path d="M4 17L23 29V46L4 34Z" fill="#8ae234" stroke="#4e9a06" stroke-width="2.500" /><path d="M44 17L25 29V46L44 34Z" fill="#fce94f" stroke="#c4a000" stroke-width="2.500" />
    {:else if n === 'brushes'}
      <path d="M11 34V10M37 34V10M24 16V39" stroke="#8f5a14" stroke-width="6" stroke-linecap="round" /><path d="M11 34V10M37 34V10M24 16V39" stroke="#d8922c" stroke-width="4" stroke-linecap="round" /><rect x="14" y="0" width="20" height="15" fill="#ef5a5a" stroke="#a33" /><path d="M14 15H34L28 20H20Z" fill="#e0a040" /><rect x="1" y="34" width="20" height="14" fill="#fbe870" stroke="#b90" /><path d="M1 34L7 29H16L21 34Z" fill="#e0a040" /><rect x="27" y="34" width="20" height="14" fill="#8cbcf0" stroke="#47a" /><path d="M27 34L32 29H41L47 34Z" fill="#e0a040" />
    {:else if n === 'history'}
      <path d="M30 13L20 2V8C8 8 3 16 9 26L17 26Q11 18 20 18V25Z" fill="#8cc096" stroke="#4d8a56" stroke-width="1.500" /><path d="M20 30L29 19V25C43 24 48 34 42 44H32Q37 35 29 36V42Z" fill="#e8823a" stroke="#b8520c" stroke-width="1.500" />
    {:else if n === 'bundo'}
      {@render undoShape('#e8823a', '#f4a870')}
    {:else if n === 'bredo'}
      <g transform="matrix(-1 0 0 1 48 0)">{@render undoShape('#7fbd8a', '#a8d8b0')}</g>
    {/if}
  </svg>
{/snippet}

{#snippet check()}
  <span class="check"><svg viewBox="0 0 28 28"><path d="M7 14L11 21L20 6" fill="none" stroke="#cfcfcf" stroke-width="3" /></svg></span>
{/snippet}

{#snippet dock()}
  <svg class="dock" viewBox="0 0 22 22"><rect x="1" y="1" width="20" height="20" rx="2" /><path d="M5 9H12V16H5ZM9 9V5H16V12H12" /></svg>
  <svg class="dock" viewBox="0 0 22 22"><rect x="1" y="1" width="20" height="20" rx="2" /><path class="x" d="M5 5L17 17M17 5L5 17" /></svg>
{/snippet}

{#snippet grip()}
  <span class="grip">{#each beard as b}<i></i>{/each}</span>
{/snippet}

{#snippet spin()}
  <span class="spin"><i class="up"></i><i class="down"></i></span>
{/snippet}

<svg class="defs" width="0" height="0">
  <defs>
    <linearGradient id="lensg" x1="0" y1="0" x2="1" y2=".3"><stop offset="0" stop-color="#e8e8e6" /><stop offset=".5" stop-color="#d6d6d4" /><stop offset=".55" stop-color="#bfbfbd" /><stop offset="1" stop-color="#c6c6c4" /></linearGradient>
  </defs>
</svg>

<div class="window">
  <header class="titlebar">
    <span class="lights"><i class="r"></i><i class="y"></i><i class="g"></i></span>
    <h1>*Module 3 - OSM and HRSL — QGIS</h1>
  </header>

  {#each rows as row, r}
    <div class="toolbar" class:last={r === 2}>
      {#each row as t, k}
        {#if t.name === '|'}
          <span class="vsep"></span>
        {:else if t.name === 'h' || t.name === 'h0' || t.name === 'hw'}
          <span class="handle {t.name}">{#each ticks as d}<i></i>{/each}</span>
        {:else}
          <span class="slot" class:off={t.off} class:wide={t.drop}>
            <span class="btn" class:on={t.on}>{@render icon(t.name)}{#if t.name === 'pencils'}<i class="arrow sub"></i>{/if}</span>
            {#if t.drop}<i class="arrow"></i>{/if}
          </span>
        {/if}
      {/each}
    </div>
  {/each}

  <main>
    <section class="layers">
      <div class="ptitle"><span class="name">Layers</span>{@render dock()}</div>
      <div class="ptools">
        <span class="pt on">{@render icon('paint')}</span>
        <span class="pt">{@render icon('group')}</span>
        <span class="pt">{@render icon('eye')}</span>
        <span class="pt">{@render icon('funnel')}</span>
        <span class="pt">{@render icon('expr')}</span>
        <span class="pa"><i class="arrow"></i></span>
        <span class="pt">{@render icon('expand')}</span>
        <span class="pt">{@render icon('collapse')}</span>
        <span class="pt">{@render icon('remove')}</span>
      </div>
      <div class="tree">
        <div class="layer">{@render check()}<span class="swatch gold"></span><span class="lname" dir="rtl">قسم المنتزه</span></div>
        <div class="layer sel">{@render check()}<span class="swatch wine"></span><span class="lname cur" dir="rtl">الاسكندرية</span></div>
      </div>
    </section>
    <div class="split">{@render grip()}</div>

    <section class="map">
      <svg viewBox="828 368 1572 1243" preserveAspectRatio="none">
        <g stroke="#232323" stroke-width="1.500" stroke-linejoin="round">
          <path fill="#a41a1c" fill-rule="evenodd" d="M1220 880L1229 897L1241 920L1267 941L1325 994L1367 1044L1495 1031L1503.500 1581L1599 1321.500L1843 1219L1836 1210.500L1763 1157L1866 1065L1865 1062L1826 1032.500L1865 999L1818 955L1746 841.500L1790 821L1803 817L1812 815L1813 812L1806 805L1815 799L1819 791L1816 782L1803 765L1896 611L1899 561L1952 560L1956 547L1933 537L1913 526L1904 522V498L1897 497L1890 492L1881 485L1873 492L1870 496L1862 498L1858 503L1848 511L1840 515L1832 522L1817 530L1810 532L1808 529L1804 529L1808 533L1803 539L1794 542L1785 539L1782 533L1783 528L1789 527L1782 528L1774 531L1777 535L1773 538L1765 540L1759 543L1761 547L1753 553L1746 558L1743 572L1746 558L1760 551L1765 544L1778 544L1780 547L1774 547L1780 552L1780 559L1773 555L1767 557L1767 561L1770 557L1775 560L1768 572L1762 577L1753 582L1752 577L1751 582L1748 579L1749 585L1746 589L1738 594L1728 603L1717 611L1708 613L1701 616L1700 610L1700 616L1693 613L1691 607L1685 615L1681 615L1685 606L1678 607L1675 603L1683 601L1686 596L1695 592L1680 598L1672 603L1670 613L1660 625L1645 636L1613 658L1593 669L1585 674L1572 686L1555 698L1547 703L1545 701L1543 705L1497 735L1477 748L1457 761L1447 770L1433 777L1413 791L1393 802L1375 809L1363 817L1312 843L1273 862L1228 877ZM1747 602L1761 592L1769 601L1786 591L1799 578L1832 564L1842 579L1800 611L1834 623L1804 634L1819 647L1789 651L1773 663L1772 645L1760 648L1753 652Z" />
          <path fill="#d6b43c" d="M1881 485L1890 477L1897 471L1896 466L1910 463L1915 458L1923 454L1922 447L1927 443L1934 445L1932 440L1935 440L1936 443L1947 442L1955 435L1963 425L1962 416L1967 412L1977 410L1982 404L1988 400L2001 398V401L1992 402L1991 410L1986 411L1989 414L1992 420L1996 432L2002 439L2006 443L2007 452L2009 453L2000 454L1971 533L1964 532L1960 536L1956 547L1933 537L1913 526L1904 522V498L1897 497L1890 492Z" />
        </g>
      </svg>
    </section>

    <div class="split right">{@render grip()}</div>
    <section class="styling">
      <div class="ptitle"><span class="name ls">Layer Styling</span>{@render dock()}</div>
      <div class="combo">
        <svg class="bone" viewBox="0 0 32 24"><path d="M3 3Q7 0 12 4Q17 6 22 3Q28 -1 31 4Q32 14 30 20Q27 22 22 17Q15 15 9 20Q4 25 2 20Q0 10 3 3Z" fill="#d8d8d6" stroke="#999" /></svg>
        <span class="ctext" dir="rtl">الاسكندرية</span>
        <i class="arrow dark"></i>
      </div>
      <div class="sbody">
        <nav>
          <span class="n0">{@render icon('paint')}</span>
          <span>{@render icon('slabel')}</span>
          <span>{@render icon('smask')}</span>
          <span>{@render icon('cube')}</span>
          <span>{@render icon('brushes')}</span>
          <span>{@render icon('history')}</span>
        </nav>
        <div class="editor">
          <div class="ehead">
            <span class="button sq"><svg viewBox="0 0 24 30"><path d="M21 2V28L2 15Z" fill="#6f9bd0" stroke="#33557f" stroke-width="1.500" /><path d="M20 4L3 15" stroke="#c8dcf0" stroke-width="1.500" /></svg></span>
            <span class="etitle">Select Color</span>
          </div>
          <div class="scroller">
            <div class="view">
              <div class="tabs">
                <span class="tab"><svg viewBox="0 0 32 32"><foreignObject width="32" height="32"><i class="wheel"></i></foreignObject><circle cx="16" cy="16" r="9.500" fill="#eee" stroke="#aaa" /><path d="M12.500 9.500L23 16L12.500 22.500Z" fill="#f43636" /></svg></span>
                <span class="tab"><svg viewBox="0 0 32 32"><rect x="1" y="1" width="30" height="30" fill="#fff" stroke="#999" stroke-width="2" /><path d="M4 4h6v6h-6z" fill="#f00" /><path d="M12 4h8v6h-8z" fill="#f80" /><path d="M22 4h6v6h-6z" fill="#fb0" /><path d="M4 12h6v8h-6z" fill="#a00040" /><path d="M12 12h8v8h-8z" fill="#e8409a" /><path d="M22 12h6v8h-6z" fill="#ff80c0" /><path d="M4 22h6v6h-6z" fill="#6000f0" /><path d="M12 22h8v6h-8z" fill="#9040ff" /><path d="M22 22h6v6h-6z" fill="#a880f0" /></svg></span>
                <span class="tab"><svg viewBox="0 0 32 32"><path d="M3 28L17 13" stroke="#88a8c8" stroke-width="4" /><path d="M3 28L18 12" stroke="#eef4fa" stroke-width="2" /><path d="M17 8L25 15" stroke="#484848" stroke-width="3" /><path d="M22 10L27 4" stroke="#666" stroke-width="5.500" stroke-linecap="round" /></svg></span>
              </div>
              <div class="pad"></div>
              <div class="spectrum"><i class="hline"></i><i class="vline"></i></div>
              <div class="pad low"></div>
              <div class="sliders">
                {#each sliders as s}
                  <div class="srow">
                    <div class="bar {s.cls}"></div>
                    <svg class="mark" style="left: {s.at - 10}px" viewBox="0 0 20 28"><path d="M0 0H20L10 10Z" fill="#000" /><path d="M0 28H20L10 18Z" fill="#fff" /></svg>
                    <i class="stub"></i>
                  </div>
                {/each}
                <div class="srow op">
                  <span class="oplab">ity</span>
                  <div class="bar opacity"></div>
                  <svg class="mark end" viewBox="0 0 20 28"><path d="M0 0H20L10 10Z" fill="#000" /><path d="M0 28H20L10 18Z" fill="#fff" /></svg>
                  <i class="stub"></i>
                </div>
              </div>
              <div class="html"><span class="hl"><b></b>notation</span><span class="field">#a41a1c</span></div>
            </div>
            <div class="vscroll"><span class="sb"><i class="up"></i></span><span class="thumb"></span><span class="rest"></span><span class="sb"><i class="down"></i></span></div>
            <div class="hscroll"><span class="sb"><i class="lf"></i></span><span class="gap1"></span><span class="thumb"></span><span class="rest"></span><span class="sb"><i class="rt"></i></span></div>
            <div class="corner"></div>
          </div>
          <div class="actions">
            <span class="button a1">{@render icon('bundo')}</span>
            <span class="button a1 a2">{@render icon('bredo')}</span>
            {@render check()}
            <span class="live">Live update</span>
            <span class="button apply">Apply</span>
          </div>
        </div>
      </div>
    </section>
  </main>

  <footer>
    <div class="search">
      <svg viewBox="0 0 26 26"><circle cx="10" cy="10" r="8.500" fill="none" stroke="#9a9a9a" stroke-width="2.200" /><path d="M16 16L24 24" stroke="#9a9a9a" stroke-width="3" /></svg>
      <span>Type to locate (⌘K)</span>
    </div>
    <span class="lab coord">Coordinate</span><span class="inp c">29.740,31.523</span>
    <svg class="mouse" viewBox="0 0 32 32"><g transform="rotate(-28 16 16)"><rect x="8" y="2" width="16" height="29" rx="7" fill="#fff" stroke="#000" stroke-width="2.500" /><path d="M13.500 3V14M18.500 3V14M8 16H24" stroke="#000" stroke-width="2" /><circle cx="16" cy="23" r="3" fill="#fff" stroke="#000" stroke-width="2" /></g><path d="M24 6L30 2M25 10L30 8" stroke="#000" stroke-width="2" stroke-dasharray="3 2" /></svg>
    <span class="lab scale">Scale</span><span class="inp s">1:746063<span class="dd"><i class="arrow dark"></i></span></span>
    <svg class="lock" viewBox="0 0 24 30"><path d="M5 15V9Q5 2 12 2T19 9V15" fill="none" stroke="#bbb" stroke-width="3.500" /><rect x="0" y="14" width="24" height="16" rx="3" fill="#777" /></svg>
    <span class="lab mag">Magnifier</span><span class="inp m">100%{@render spin()}</span>
    <span class="lab rot">Rotation</span><span class="inp ri">0.0 °{@render spin()}</span>
    <span class="rc">{@render check()}</span><span class="lab ren">Render</span>
    <svg class="crs" viewBox="0 0 30 30"><path d="M7 3Q15 -2 23 3L30 14L24 26Q15 32 6 26L0 14Z" fill="#bbb" /><path d="M15 1V29M3 9H27M0 15H30M4 22H26M9 2Q5 15 10 28M21 2Q25 15 20 28" fill="none" stroke="#555" stroke-width="1.500" /></svg>
    <span class="lab epsg">EPSG:4326</span>
    <svg class="bubble" viewBox="0 0 33 32"><path d="M16 1C25 1 32 6 32 13S26 24 24 24L30 31L18 26C6 27 0 20 0 13S7 1 16 1Z" fill="#777" /><g fill="#fff"><circle cx="8.500" cy="13" r="2.400" /><circle cx="16" cy="13" r="2.400" /><circle cx="23.500" cy="13" r="2.400" /></g></svg>
  </footer>
</div>

<style>
  :global(body) { background: #fff; display: flow-root; overflow: hidden; height: 1822px; }
  * { box-sizing: border-box; }
  .defs { position: absolute; }
  .window {
    width: 2880px; height: 1598px; margin: 76px 0 0 112px; display: flex; flex-direction: column;
    border: 2px solid #5c5c5c; border-top-color: #777; border-radius: 20px; overflow: hidden;
    background: #323232; color: #e4e4e4; font: 500 22px Inter, "Noto Sans", sans-serif;
    box-shadow: 0 0 0 1px #000, 0 36px 72px 4px rgba(0, 0, 0, .58), 0 0 50px rgba(0, 0, 0, .12);
  }
  i { display: block; }
  svg { display: block; flex: none; }

  .titlebar { display: grid; grid-template-columns: 140px 1fr 140px; align-items: center; flex: none; height: 55px; background: #3a373a; border-bottom: 1px solid #000; }
  .lights { display: flex; gap: 16px; padding-left: 14px; margin-top: -1px; }
  .lights i { width: 24px; height: 24px; border-radius: 50%; }
  .r { background: #ed6a5e; } .y { background: #f5bf4f; } .g { background: #61c554; }
  h1 { margin: 0; text-align: center; font-size: 26.300px; font-weight: 600; color: #b8b6b8; line-height: 30px; padding-bottom: 4px; }

  .toolbar { flex: none; display: flex; align-items: center; height: 78px; padding-bottom: 3px; background: linear-gradient(#353535, #303030); border-bottom: 1px solid #7a7a7a; box-shadow: inset 0 -3px #292929; }
  .toolbar.last { height: 76px; border-bottom-width: 2px; padding-bottom: 0; }
  .ic { width: 48px; height: 48px; overflow: visible; }
  .handle { flex: none; width: 32px; display: grid; grid-template-columns: 4px 4px; gap: 2px 3px; justify-content: end; padding-right: 5px; }
  .handle.h0 { width: 23px; } .handle.hw { width: 34px; }
  .handle i { width: 4px; height: 4px; background: #8a8a8a; }
  .vsep { width: 14px; height: 38px; background: linear-gradient(90deg, transparent 6px, #262626 6px, #262626 8px, transparent 8px); }
  .slot { display: flex; align-items: center; width: 66px; flex: none; padding-left: 3px; }
  .slot.wide { width: 90px; }
  .slot.off .ic { opacity: .3; }
  .btn { position: relative; width: 60px; height: 60px; display: grid; place-items: center; flex: none; }
  .btn.on { border: 2px solid #545454; outline: 2px solid #232323; border-radius: 6px; background: #363636; }
  .arrow { flex: none; width: 16px; height: 9px; background: #b4b4b4; clip-path: polygon(0 0, 100% 0, 50% 100%); }
  .slot .arrow { margin-left: 6px; }
  .slot .arrow.sub { position: absolute; right: 3px; bottom: 5px; width: 12px; height: 6px; margin: 0; }
  .arrow.dark { background: #161616; }

  main { flex: none; height: 1247px; display: flex; }
  .layers { width: 698px; display: flex; flex-direction: column; }
  .ptitle { display: flex; align-items: center; height: 46px; padding: 0 2px 7px 6px; gap: 6px; margin-bottom: 1px; }
  .name { flex: 1; font-size: 21.800px; font-weight: 500; }
  .dock { width: 23px; height: 22px; fill: none; stroke: #a09c94; stroke-width: 1.500; }
  .dock .x { stroke-width: 2.500; stroke: #8a8a84; }
  .ptools { display: flex; align-items: center; height: 45px; padding-left: 5px; margin-bottom: 9px; }
  .ptools .ic { width: 31px; height: 31px; }
  .pt { width: 50px; display: grid; place-items: center; height: 46px; }
  .pt.on { border: 2px solid #545454; outline: 2px solid #232323; border-radius: 6px; width: 44px; height: 42px; margin: 0 3px; }
  .pa { width: 24px; display: grid; place-items: center; }
  .tree { flex: 1; background: #1e1e1e; border-top: 1px solid #424242; }
  .layer { height: 38px; display: flex; align-items: center; padding-left: 46px; gap: 12px; }
  .layer.sel { background: #474747; }
  .check { width: 28px; height: 27px; flex: none; background: #1c1c1c; border: 2px solid #272727; border-radius: 3px; display: grid; place-items: center; }
  .check svg { width: 26px; height: 26px; }
  .swatch { width: 32px; height: 32px; }
  .gold { background: #d6b43c; border: 1px solid #9a8430; } .wine { background: #852f3e; border: 1px solid #6e2a36; }
  .lname { font: 400 24px/34px "DejaVu Sans", sans-serif; color: #e4e4e4; -webkit-text-stroke: .3px; }
  .lname.cur { color: #fff; height: 38px; border-bottom: 2px solid #fff; font-size: 24.800px; }
  .split { width: 16px; flex: none; display: grid; place-items: center; padding-left: 2px; }
  .split.right { width: 20px; border-left: 2px solid #272727; padding-left: 0; }
  .grip { display: grid; gap: 2px; margin-top: 10px; }
  .split.right .grip { margin-right: 2px; }
  .grip i { width: 4px; height: 4px; background: #888; }

  .map { width: 1572px; flex: none; margin-top: 3px; background: #fff; }
  .map svg { width: 1572px; height: 1244px; }

  .styling { flex: 1; min-width: 0; display: flex; flex-direction: column; }
  .name.ls { font-size: 21.600px; }
  .styling .ptitle { padding-left: 1px; margin-bottom: 0; padding-right: 2px; }
  .combo { height: 46px; width: 565px; display: flex; align-items: center; padding: 0 14px 0 11px; background: linear-gradient(#474747, #3d3d3d); border: 2px solid #555; outline: 1px solid #222; border-radius: 6px; margin-bottom: 12px; }
  .bone { width: 32px; height: 24px; margin: -3px 0 0 -2px; }
  .ctext { flex: 1; font: 400 24.800px/40px "DejaVu Sans", sans-serif; color: #0a0a0a; margin-left: 7px; direction: ltr; text-align: left; -webkit-text-stroke: .3px; }
  .sbody { flex: 1; display: flex; min-height: 0; }
  nav { width: 76px; display: flex; flex-direction: column; align-items: center; background: #434343; margin-bottom: 4px; padding-right: 17px; }
  nav .ic { width: 44px; height: 44px; }
  nav span { height: 64px; display: grid; place-items: center; }
  nav .n0 { width: 76px; height: 65px; background: #323232; margin-right: -17px; padding-right: 6px; }
  nav .n0 .ic { opacity: .75; width: 46px; height: 40px; }
  .editor { width: 490px; padding-left: 6px; display: flex; flex-direction: column; }
  .ehead { display: flex; align-items: center; height: 46px; margin-bottom: 12px; flex: none; }
  .button { display: grid; place-items: center; background: linear-gradient(#484848, #3a3a3a); border: 2px solid #5a5a5a; outline: 1px solid #222; border-radius: 5px; }
  .sq { width: 45px; height: 44px; margin-left: 1px; }
  .sq svg { width: 20px; height: 28px; }
  .etitle { margin-left: 21px; font-size: 25.500px; color: #fff; }
  .scroller { display: grid; grid-template: 993px 28px / 456px 28px; flex: none; }
  .view { overflow: hidden; padding-top: 4px; }
  .tabs { height: 50px; display: flex; gap: 2px; padding-left: 6px; align-items: flex-end; border-bottom: 2px solid #505050; }
  .tab { width: 86px; height: 47px; display: grid; place-items: center; padding-right: 11px; border: 2px solid #505050; border-bottom: 1px solid #222; border-radius: 6px 6px 0 0; background: #383838; }
  .tab svg { width: 32px; height: 32px; }
  .wheel { width: 32px; height: 32px; border-radius: 50%; border: 2px solid #999; background: conic-gradient(#bf0, #fa0, #f22, #f0a, #80f, #04f, #0cf, #0f4, #bf0); }
  .pad { height: 21px; background: #3d3d3d; border-bottom: 1px solid #222; }
  .pad.low { height: 22px; border-top: 2px solid #2a2a2a; border-bottom: 2px solid #505050; }
  .spectrum {
    position: relative; height: 395px;
    background: linear-gradient(90deg, rgba(164, 164, 164, .92), rgba(164, 164, 164, .5) 50%, rgba(164, 164, 164, .1)), linear-gradient(#a40000 7px, #a400a4 70px, #0000a4 134px, #00a4a4 199px, #00a400 265px, #a4a400 329px, #a40000 395px);
  }
  .hline { position: absolute; left: 0; top: 0; width: 100%; height: 7px; background: linear-gradient(#3d3d3d 1px, #ccc 1px, #ccc 2px, #000 2px, #000 4px, #fff 4px); }
  .vline { position: absolute; left: 432px; top: 4px; bottom: 1px; width: 6px; background: linear-gradient(90deg, #fff 1px, #000 1px, #000 3px, #fff 3px); }
  .sliders { padding-top: 37px; }
  .srow { position: relative; height: 60px; padding: 9px 0 0 11px; }
  .bar { width: 418px; height: 24px; }
  .hue { margin-left: 2px; width: 416px; background: linear-gradient(90deg, #a41a1c, #a4a41a 17%, #1aa41a 33%, #1aa4a4 50%, #1a1aa4 67%, #a41aa4 83%, #a41a1c); }
  .sat { background: linear-gradient(90deg, #a4a4a4, #a40000); }
  .val { background: linear-gradient(90deg, #000, #ff292c); }
  .red { background: linear-gradient(90deg, #001a1c, #ff1a1c); }
  .green { margin-left: 2px; width: 416px; background: linear-gradient(90deg, #a4001c, #a4ff1c); }
  .blue { background: linear-gradient(90deg, #a41a00, #a41aff); }
  .mark { position: absolute; top: 8px; width: 20px; height: 28px; }
  .mark.end { left: 419px; }
  .stub { position: absolute; left: 448px; top: 0; width: 12px; height: 44px; border-radius: 6px 0 0 6px; background: #1e1e1e; border: 2px solid #262626; }
  .op { display: flex; padding: 10px 0 0 0; }
  .op .opacity { height: 22px; width: 378px; margin-left: 22px; background: linear-gradient(90deg, rgba(164, 26, 28, 0), #a41a1c), repeating-conic-gradient(#fff 0 25%, #c8c8c8 0 50%) 0 0 / 16px 14.600px; }
  .oplab { width: 28px; line-height: 26px; font-size: 25px; color: #fff; margin-left: -1px; margin-right: 1px; }
  .html { display: flex; align-items: center; height: 40px; margin-top: -2px; color: #fff; }
  .hl { width: 126px; font-size: 24.300px; display: flex; align-items: baseline; gap: 8px; }
  .hl b { width: 6px; height: 2px; background: #fff; }
  .field { flex: 1; height: 40px; line-height: 36px; background: #1e1e1e; border: 2px solid #262626; padding-left: 3px; font-size: 25px; border-radius: 5px 0 0 5px; }
  .vscroll, .hscroll { display: flex; background: #383838; }
  .vscroll { flex-direction: column; width: 27px; margin-left: 1px; }
  .sb { flex: none; display: grid; place-items: center; width: 27px; height: 27px; background: #383838; border: 2px solid #505050; outline: 1px solid #2a2a2a; }
  .hscroll .sb:first-child { width: 25px; }
  .up, .down, .lf, .rt { width: 16px; height: 10px; background: #bbb; }
  .up { clip-path: polygon(50% 0, 100% 100%, 0 100%); } .down { clip-path: polygon(0 0, 100% 0, 50% 100%); }
  .lf, .rt { width: 9px; height: 15px; }
  .lf { clip-path: polygon(100% 0, 100% 100%, 0 50%); } .rt { clip-path: polygon(0 0, 100% 50%, 0 100%); }
  .thumb { background: #424242; border: 2px solid #535353; outline: 1px solid #242424; }
  .vscroll .thumb { height: 689px; } .rest { flex: 1; border: 1px solid #2e2e2e; }
  .gap1 { width: 50px; border: 1px solid #2e2e2e; }
  .hscroll .thumb { width: 262px; }
  .corner { border: 1px solid #2b2b2b; margin-left: 1px; }
  .actions { display: flex; align-items: center; height: 47px; margin-top: 12px; flex: none; }
  .a1 { width: 45px; height: 44px; margin-left: 1px; }
  .a2 { margin: 0 12px 0 15px; }
  .a1 .ic { width: 32px; height: 28px; }
  .live { width: 166px; margin-left: 12px; font-size: 25.200px; }
  .apply { width: 157px; height: 46px; font-size: 26px; margin-left: 1px; padding-bottom: 1px; }

  footer { flex: none; height: 60px; display: flex; align-items: center; padding: 3px 0 0 6px; color: #f0f0f0; border-top: 1px solid #292929; }
  footer .lab, footer .inp { white-space: pre; font-size: 22px; }
  .search { width: 428px; height: 48px; display: flex; align-items: center; gap: 16px; padding-left: 15px; background: #1e1e1e; border: 2px solid #262626; border-radius: 6px; color: #959595; font-size: 25.200px; font-weight: 400; }
  .search svg { width: 25px; height: 25px; }
  .inp { height: 46px; line-height: 42px; background: #1e1e1e; border: 2px solid #262626; border-radius: 6px; color: #fff; display: flex; }
  .coord { margin-left: 742px; width: 122px; } .c { width: 194px; padding-left: 16px; }
  .mouse { width: 32px; height: 32px; margin-left: 8px; }
  .scale { margin-left: 26px; width: 64px; } .s { width: 186px; padding-left: 7px; justify-content: space-between; }
  .dd { width: 40px; display: grid; place-items: center; background: #424242; border: 2px solid #555; border-left: 0; border-radius: 0 6px 6px 0; }
  .lock { width: 24px; height: 30px; margin-left: 24px; }
  .mag { margin-left: 19px; width: 105px; } .m { width: 182px; padding-left: 8px; justify-content: space-between; }
  .rot { margin-left: 18px; width: 106px; } .ri { width: 186px; padding-left: 8px; justify-content: space-between; }
  .spin { width: 28px; display: grid; place-items: center; background: #424242; border: 2px solid #555; border-left: 0; border-radius: 0 6px 6px 0; }
  .rc { margin-left: 12px; } .ren { margin-left: 10px; width: 107px; color: #e0e0e0; }
  .crs { width: 30px; height: 30px; }
  .epsg { margin-left: 5px; width: 168px; color: #e0e0e0; }
  .bubble { width: 33px; height: 32px; }
</style>
